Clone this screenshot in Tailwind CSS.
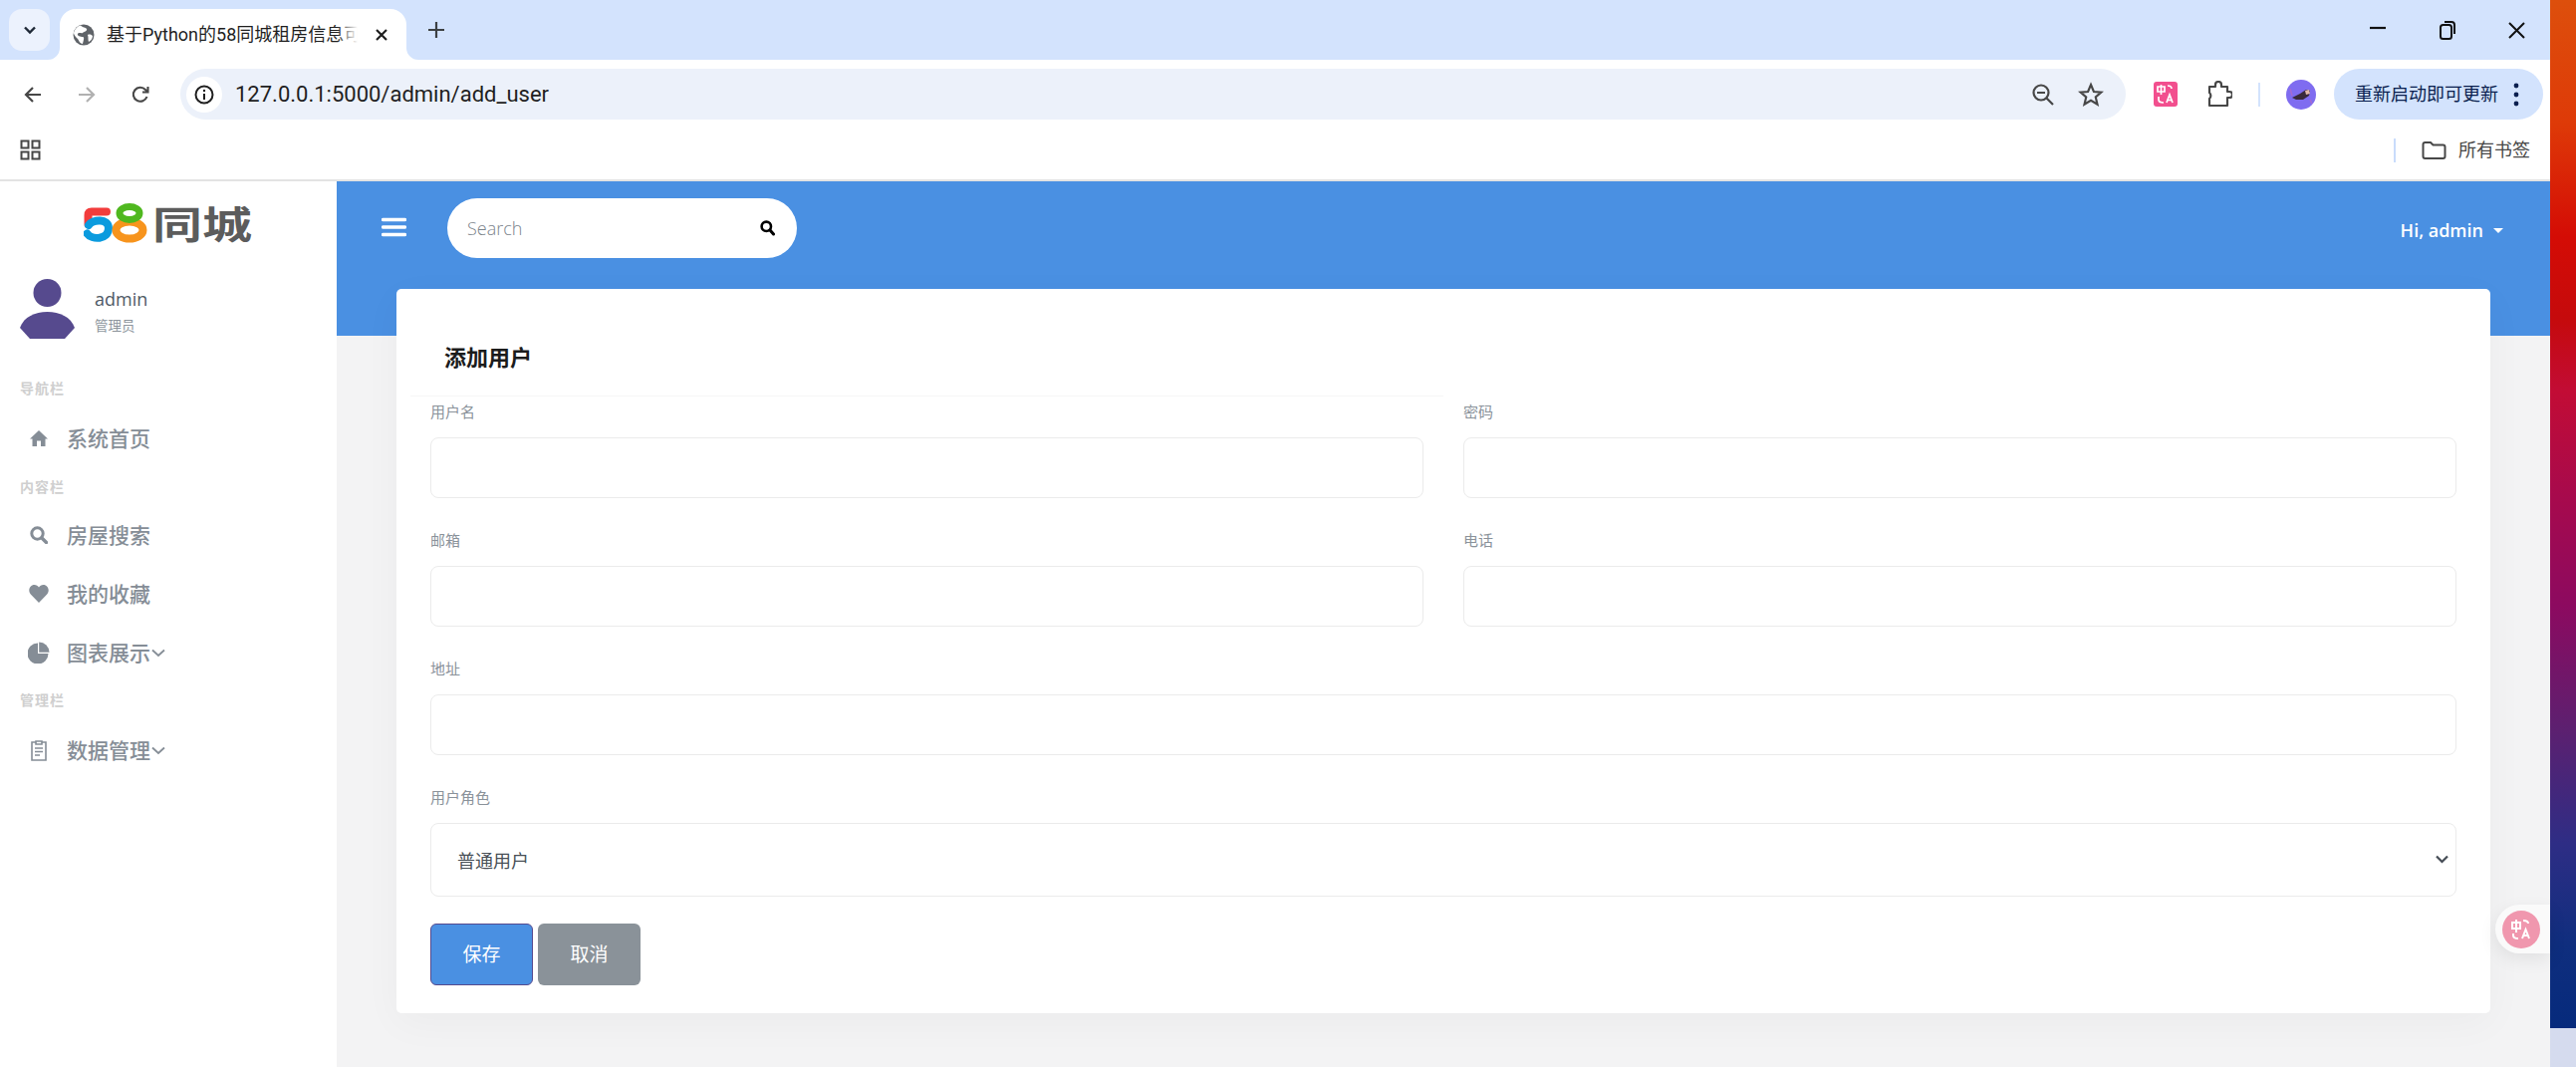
<!DOCTYPE html>
<html lang="zh-CN">
<head>
<meta charset="utf-8">
<title>添加用户</title>
<script src="https://cdn.jsdelivr.net/npm/@tailwindcss/browser@4"></script>
</head>
<body class="m-0 overflow-hidden bg-white">
<div class="relative flex h-[1071px] w-[2586px] overflow-hidden font-['Open_Sans','Noto_Sans_CJK_SC',sans-serif]">

  <div class="flex h-full w-[2560px] flex-col">
    <!-- tab strip -->
    <div class="flex h-[60px] shrink-0 items-end bg-[#d3e3fd] font-['Roboto','Noto_Sans_CJK_SC',sans-serif]">
      <div class="mb-[9px] ml-[9px] flex h-[42px] w-[41px] items-center justify-center rounded-[13px] bg-[#ecf2fd]">
        <svg width="14" height="10" viewBox="0 0 14 10"><path d="M2 2.500 7 7.500 12 2.500" fill="none" stroke="#1f2937" stroke-width="2.400"/></svg>
      </div>
      <div class="relative ml-[10px] flex h-[51px] w-[348px] items-center rounded-t-[16px] bg-white pl-[13px]">
        <svg class="absolute bottom-0 -left-[12px]" width="12" height="12" viewBox="0 0 12 12"><path d="M12 0V12H0A12 12 0 0 0 12 0Z" fill="#fff"/></svg>
        <svg class="absolute -right-[12px] bottom-0" width="12" height="12" viewBox="0 0 12 12"><path d="M0 0V12H12A12 12 0 0 1 0 0Z" fill="#fff"/></svg>
        <svg width="22" height="22" viewBox="0 0 22 22" class="shrink-0"><circle cx="11" cy="11" r="10.500" fill="#5f6368"/><path d="M8 1.500C10 4 13 3 14 5S11 8 10 9 6 8 5 10 8 13 10 13 11 16 10 20C7 20 6 16 5 15S1 11 1 9C2 5 5 2 8 1.500ZM15 11C17 10 19 11 20 12 20 15 18 17 16 18 15 16 16 13 15 11Z" fill="#fff"/></svg>
        <div class="relative ml-[12px] h-[26px] w-[261px] overflow-hidden whitespace-nowrap text-[18px] leading-[26px] text-[#1f1f1f]">基于Python的58同城租房信息可视化系统
          <div class="absolute inset-y-0 right-0 w-[30px] bg-gradient-to-r from-white/0 to-white to-70%"></div>
        </div>
        <svg class="ml-[8px] shrink-0" width="14" height="14" viewBox="0 0 14 14"><path d="M2 2 12 12M12 2 2 12" stroke="#1f1f1f" stroke-width="2.200"/></svg>
      </div>
      <svg class="mb-[21px] ml-[21px]" width="18" height="18" viewBox="0 0 18 18"><path d="M9 1V17M1 9H17" stroke="#3c4043" stroke-width="2.200"/></svg>
      <div class="ml-auto mb-[20px] flex items-center">
        <svg width="16" height="4" viewBox="0 0 16 4" class="mb-[4px]"><path d="M0 2H16" stroke="#111" stroke-width="2.200"/></svg>
        <svg class="ml-[53px]" width="18" height="20" viewBox="0 0 18 20"><rect x="2" y="5" width="11" height="14" rx="2.500" fill="none" stroke="#111" stroke-width="2"/><path d="M6 2H13Q16 2 16 5V14" fill="none" stroke="#111" stroke-width="2"/></svg>
        <svg class="ml-[52px] mr-[25px]" width="17" height="17" viewBox="0 0 17 17"><path d="M1 1 16 16M16 1 1 16" stroke="#111" stroke-width="2"/></svg>
      </div>
    </div>

    <!-- toolbar -->
    <div class="flex h-[60px] shrink-0 items-end rounded-t-[14px] bg-white pb-0 font-['Roboto','Noto_Sans_CJK_SC',sans-serif]">
      <div class="flex h-[51px] w-[181px] shrink-0 items-center pl-[23px]">
        <svg width="20" height="20" viewBox="0 0 20 20"><path d="M18 10H3M10 3 3 10 10 17" fill="none" stroke="#474747" stroke-width="2.200"/></svg>
        <svg class="ml-[34px]" width="20" height="20" viewBox="0 0 20 20"><path d="M2 10H17M10 3 17 10 10 17" fill="none" stroke="#b1b1b1" stroke-width="2.200"/></svg>
        <svg class="ml-[34px]" width="20" height="20" viewBox="0 0 20 20"><path d="M16.500 12A7 7 0 1 1 15 5L17.500 7.500M17.500 2V7.500H12" fill="none" stroke="#474747" stroke-width="2.100"/></svg>
      </div>
      <div class="flex h-[51px] w-[1953px] shrink-0 items-center rounded-full bg-[#ecf1fa]">
        <div class="ml-[6px] flex h-[36px] w-[36px] items-center justify-center rounded-full bg-white">
          <svg width="20" height="20" viewBox="0 0 20 20"><circle cx="10" cy="10" r="8.500" fill="none" stroke="#1f1f1f" stroke-width="2"/><path d="M10 9V15" stroke="#1f1f1f" stroke-width="2"/><circle cx="10" cy="6" r="1.200" fill="#1f1f1f"/></svg>
        </div>
        <span class="ml-[13px] text-[22px] leading-none text-[#1f1f1f]">127.0.0.1:5000/admin/add_user</span>
        <svg class="ml-auto" width="24" height="24" viewBox="0 0 24 24"><circle cx="10" cy="10" r="7.500" fill="none" stroke="#474747" stroke-width="2.200"/><path d="M6 10H14M15.500 15.500 22 22" stroke="#474747" stroke-width="2.200"/></svg>
        <svg class="ml-[23px] mr-[22px]" width="26" height="26" viewBox="0 0 24 24"><path d="M12 2.800 14.700 9.200 21.600 9.800 16.400 14.300 18 21 12 17.400 6 21 7.600 14.300 2.400 9.800 9.300 9.200Z" fill="none" stroke="#474747" stroke-width="2"/></svg>
      </div>
      <div class="flex h-[51px] items-center">
        <div class="ml-[28px] flex h-[25px] w-[24px] items-center justify-center rounded-[3px] bg-[#f24f8e]">
          <svg width="20" height="21" viewBox="0 0 20 21"><path d="M2 3H9V8H2ZM5.500 1V11M12 2Q16 2 16 5M3 13V16Q3 19 8 19M11 19 14 11 17 19M12 16.500H16" fill="none" stroke="#fff" stroke-width="1.700"/></svg>
        </div>
        <svg class="ml-[29px]" width="26" height="28" viewBox="0 0 26 28"><path d="M3 6H9V4A3 3 0 0 1 15 4V6H21V11H23A3 3 0 0 1 23 17H21V25H3V18A4 4 0 0 0 3 12Z" fill="none" stroke="#474747" stroke-width="2.200" stroke-linejoin="round"/></svg>
        <div class="ml-[26px] h-[24px] w-[2px] bg-[#d3e3fd]"></div>
        <svg class="ml-[26px]" width="30" height="30" viewBox="0 0 30 30"><circle cx="15" cy="15" r="15" fill="#7f6cf0"/><path d="M6 18 14 14 20 10 24 11 23 16 17 20 10 20Z" fill="#3a2a3a"/><path d="M19 11 23 10 24 14 20 15Z" fill="#e3b9a9"/><path d="M4 9 6 16M24 20 26 24" stroke="#a56bd0" stroke-width="1.500"/></svg>
        <div class="ml-[18px] flex h-[51px] w-[210px] items-center rounded-full bg-[#d3e3fd] pl-[21px] text-[18px] leading-none text-[#0a1f4f]">
          <span class="whitespace-nowrap">重新启动即可更新</span>
          <svg class="ml-[15px]" width="6" height="24" viewBox="0 0 6 24"><circle cx="3" cy="3" r="2.400" fill="#0a1f4f"/><circle cx="3" cy="12" r="2.400" fill="#0a1f4f"/><circle cx="3" cy="21" r="2.400" fill="#0a1f4f"/></svg>
        </div>
      </div>
    </div>

    <!-- bookmarks -->
    <div class="flex h-[60px] shrink-0 items-center bg-white pl-[20px] font-['Roboto','Noto_Sans_CJK_SC',sans-serif]">
      <svg width="21" height="21" viewBox="0 0 21 21"><path d="M1.500 1.500H8.500V8.500H1.500ZM12.500 1.500H19.500V8.500H12.500ZM1.500 12.500H8.500V19.500H1.500ZM12.500 12.500H19.500V19.500H12.500Z" fill="none" stroke="#474747" stroke-width="2"/></svg>
      <div class="ml-auto flex items-center pr-[20px] pt-[2px]">
        <div class="h-[24px] w-[2px] bg-[#c9dcfb]"></div>
        <svg class="ml-[26px]" width="25" height="18" viewBox="0 0 25 18"><path d="M1.500 3Q1.500 1 3.500 1H9L11.500 3.500H21.500Q23.500 3.500 23.500 5.500V15Q23.500 17 21.500 17H3.500Q1.500 17 1.500 15Z" fill="none" stroke="#474747" stroke-width="2"/></svg>
        <span class="ml-[12px] text-[18px] leading-none text-[#474747]">所有书签</span>
      </div>
    </div>
    <div class="h-[2px] shrink-0 bg-[#e3e3e3]"></div>

    <!-- app -->
    <div class="flex min-h-0 flex-1">
      <aside class="flex w-[338px] shrink-0 flex-col bg-white">
        <div class="flex h-[42px] items-start pl-[84px] pt-[22px]">
          <svg class="-mt-[1px] shrink-0" width="66" height="42" viewBox="84 203 66 42" fill="none">
            <path d="M107 212.500H92Q88.500 212.500 88.500 216V225" stroke="#f23c3c" stroke-width="8" stroke-linecap="round"/>
            <path d="M89 226C93 220 109 219 109 229C109 241 92 241 87.500 234.500" stroke="#0b9bde" stroke-width="8" stroke-linecap="round"/>
            <ellipse cx="130" cy="231" rx="13.500" ry="8.500" stroke="#f7941d" stroke-width="8"/>
            <ellipse cx="130" cy="214" rx="10" ry="6.500" stroke="#4fb81f" stroke-width="7"/>
          </svg>
          <span class="-mt-[7px] ml-[3px] origin-center scale-y-[0.76] whitespace-nowrap font-['Noto_Sans_CJK_SC',sans-serif] text-[50px] font-bold leading-[50px] text-[#5c5c5c]">同城</span>
        </div>
        <div class="mt-[56px] flex h-[62px] items-start pl-[20px]">
          <svg width="56" height="60" viewBox="0 0 56 60"><circle cx="27.500" cy="14" r="14" fill="#564a8e"/><path d="M0 49C4 38 15 33 27.500 33S51 38 55 49L45 60H10Z" fill="#564a8e"/></svg>
          <div class="ml-[19px] flex flex-col">
            <span class="mt-[8px] text-[18px] leading-[24px] text-[#4e5965]">admin</span>
            <span class="mt-[6px] text-[13.500px] leading-[18px] text-[#8d959c]">管理员</span>
          </div>
        </div>
        <div class="mt-[38px] pl-[20px] text-[14px] font-bold leading-[20px] tracking-[1px] text-[#cfcfcf]">导航栏</div>
        <div class="mt-[17px] flex h-[46px] items-center pl-[30px] text-[21px] font-medium leading-none text-[#858d96]">
          <svg width="18" height="18" viewBox="0 0 18 18"><path d="M9 1 18 9.500H15.500V17H11V11.500H7V17H2.500V9.500H0Z" fill="#858d96"/></svg>
          <span class="ml-[19px]">系统首页</span>
        </div>
        <div class="mt-[16px] pl-[20px] text-[14px] font-bold leading-[20px] tracking-[1px] text-[#cfcfcf]">内容栏</div>
        <div class="mt-[15px] flex h-[46px] items-center pl-[30px] text-[21px] font-medium leading-none text-[#858d96]">
          <svg width="18" height="18" viewBox="0 0 18 18"><circle cx="7.500" cy="7.500" r="5.700" fill="none" stroke="#858d96" stroke-width="3"/><path d="M12 12 16.500 16.500" stroke="#858d96" stroke-width="3.400" stroke-linecap="round"/></svg>
          <span class="ml-[19px]">房屋搜索</span>
        </div>
        <div class="mt-[13px] flex h-[46px] items-center pl-[29px] text-[21px] font-medium leading-none text-[#858d96]">
          <svg width="20" height="18" viewBox="0 0 20 18"><path d="M10 18 1.800 9.500C-1.500 5.500 1 0 5.500 0 7.500 0 9 1 10 2.500 11 1 12.500 0 14.500 0 19 0 21.500 5.500 18.200 9.500Z" fill="#858d96"/></svg>
          <span class="ml-[18px]">我的收藏</span>
        </div>
        <div class="mt-[13px] flex h-[46px] items-center pl-[28px] text-[21px] font-medium leading-none text-[#858d96]">
          <svg width="22" height="22" viewBox="0 0 22 22"><path d="M10 1.500V12H20.500A10.500 10.500 0 1 1 10 1.500Z" fill="#858d96"/><path d="M11.200 0.500A10.500 10.500 0 0 1 21.500 10.800H11.200Z" fill="#858d96"/></svg>
          <span class="ml-[17px]">图表展示</span>
          <svg class="ml-[1px]" width="14" height="9" viewBox="0 0 14 9"><path d="M1 1.500 7 7 13 1.500" fill="none" stroke="#858d96" stroke-width="1.800"/></svg>
        </div>
        <div class="mt-[15px] pl-[20px] text-[14px] font-bold leading-[20px] tracking-[1px] text-[#cfcfcf]">管理栏</div>
        <div class="mt-[17px] flex h-[46px] items-center pl-[31px] text-[21px] font-medium leading-none text-[#858d96]">
          <svg width="16" height="21" viewBox="0 0 16 21"><path d="M5 2H1V20H15V2H11M5 1H11V4H5ZM4 8H12M4 11.500H12M4 15H9" fill="none" stroke="#858d96" stroke-width="1.600"/></svg>
          <span class="ml-[20px]">数据管理</span>
          <svg class="ml-[1px]" width="14" height="9" viewBox="0 0 14 9"><path d="M1 1.500 7 7 13 1.500" fill="none" stroke="#858d96" stroke-width="1.800"/></svg>
        </div>
      </aside>

      <main class="flex min-w-0 flex-1 flex-col bg-[#f3f3f4]">
        <div class="flex h-[155px] shrink-0 items-start bg-[#4a90e2] pl-[45px] pr-[47px] pt-[17px]">
          <svg class="mt-[19px]" width="25" height="20" viewBox="0 0 25 20"><path d="M1.500 2.500H23.500M1.500 10H23.500M1.500 17.500H23.500" stroke="#fff" stroke-width="3.400" stroke-linecap="round"/></svg>
          <div class="relative ml-[41px] h-[60px] w-[351px] rounded-full bg-white">
            <input type="text" placeholder="Search" class="h-full w-full bg-transparent pl-[20px] pr-[60px] text-[18px] font-light text-[#333] outline-none placeholder:text-[#7c848c]">
            <svg class="absolute right-[22px] top-[22px]" width="15" height="16" viewBox="0 0 15 16"><circle cx="6.300" cy="6.300" r="4.700" fill="none" stroke="#000" stroke-width="2.600"/><path d="M10 10 13.500 14" stroke="#000" stroke-width="3" stroke-linecap="round"/></svg>
          </div>
          <div class="ml-auto mt-[20px] flex items-center text-[18px] font-semibold leading-[24px] text-white">
            <span>Hi, admin</span>
            <span class="ml-[10px] h-0 w-0 border-x-[5px] border-t-[5px] border-x-transparent border-t-white"></span>
          </div>
        </div>
        <div class="-mt-[47px] px-[60px]">
          <div class="h-[727px] w-[2102px] rounded-[5px] bg-white shadow-[0_10px_40px_rgba(0,0,0,0.035)]">
            <div class="mx-[14px] h-[108px] w-[1037px] border-b border-[#f6f6f6] pl-[34px] pt-[52px] text-[22px] font-bold leading-[32px] text-[#1c1c1c]">添加用户</div>
            <form class="grid grid-cols-2 gap-x-[40px] px-[34px] pt-[5px] text-[15px] leading-[20px] text-[#8a929a]">
              <div class="h-[129px]">
                <label class="block tracking-[0px]">用户名</label>
                <input type="text" class="mt-[16px] h-[61px] w-full rounded-[8px] border border-[#ebebeb] bg-white outline-none">
              </div>
              <div class="h-[129px]">
                <label class="block">密码</label>
                <input type="password" class="mt-[16px] h-[61px] w-full rounded-[8px] border border-[#ebebeb] bg-white outline-none">
              </div>
              <div class="h-[129px]">
                <label class="block">邮箱</label>
                <input type="text" class="mt-[16px] h-[61px] w-full rounded-[8px] border border-[#ebebeb] bg-white outline-none">
              </div>
              <div class="h-[129px]">
                <label class="block">电话</label>
                <input type="text" class="mt-[16px] h-[61px] w-full rounded-[8px] border border-[#ebebeb] bg-white outline-none">
              </div>
              <div class="col-span-2 h-[129px]">
                <label class="block">地址</label>
                <input type="text" class="mt-[16px] h-[61px] w-full rounded-[8px] border border-[#ebebeb] bg-white outline-none">
              </div>
              <div class="col-span-2">
                <label class="block">用户角色</label>
                <div class="relative mt-[16px]">
                  <select class="h-[74px] w-full appearance-none rounded-[8px] border border-[#ebebeb] bg-white pl-[26px] font-['Noto_Sans_CJK_SC',sans-serif] text-[18px] text-[#495057] outline-none">
                    <option>普通用户</option>
                  </select>
                  <svg class="absolute right-[8px] top-[32px]" width="13" height="9" viewBox="0 0 13 9"><path d="M1 1.500 6.500 7 12 1.500" fill="none" stroke="#454c55" stroke-width="2.200"/></svg>
                </div>
              </div>
              <div class="col-span-2 mt-[27px] flex gap-[5px]">
                <button type="button" class="h-[62px] w-[103px] rounded-[6px] border border-[#564a8e] bg-[#4a90e2] text-[19px] leading-none text-white">保存</button>
                <button type="button" class="h-[62px] w-[103px] rounded-[6px] bg-[#8a9299] text-[19px] leading-none text-white">取消</button>
              </div>
            </form>
          </div>
        </div>
      </main>
    </div>
  </div>

  <div class="flex h-full w-[26px] shrink-0 flex-col">
    <div class="h-[1032px] bg-[linear-gradient(180deg,#dd4f0c_0%,#de3a08_12%,#d40c05_23%,#c50a0c_31%,#c20c35_38%,#a80a4c_48%,#8c0a60_59%,#5c2070_71%,#2e2d85_82%,#0f2e7e_92%,#062a7c_100%)]"></div>
    <div class="flex-1 bg-[#d5dbee]"></div>
  </div>

  <!-- floating translate button -->
  <div class="absolute left-[2505px] top-[908px] flex h-[49px] w-[55px] items-center rounded-l-full bg-[#fafafa] pl-[7px] shadow-[0_6px_18px_rgba(0,0,0,0.08)]">
    <div class="flex h-[38px] w-[38px] items-center justify-center rounded-full bg-[#f097ae]">
      <svg width="24" height="24" viewBox="0 0 24 24"><path d="M3 5H11V11H3ZM7 2V15M14 3Q19 3 19 6M4 16V18Q4 21 9 21M13 21 16.500 12 20 21M14 18H19" fill="none" stroke="#fff" stroke-width="2"/></svg>
    </div>
  </div>
</div>
</body>
</html>
